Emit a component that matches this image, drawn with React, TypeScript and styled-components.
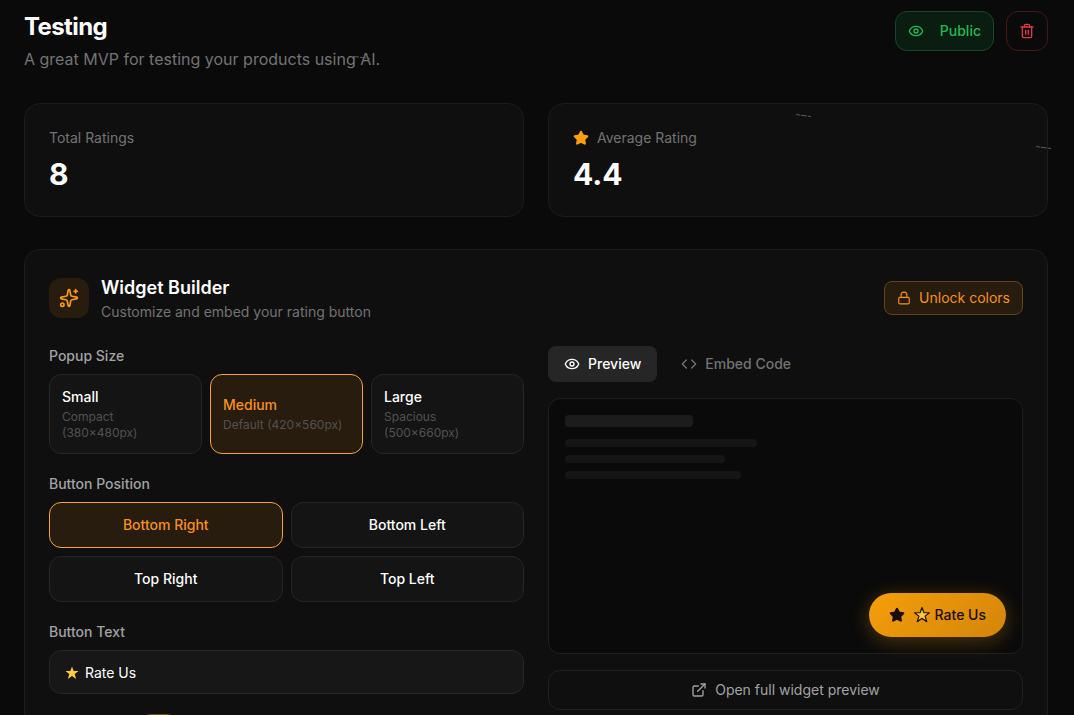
import React, { useState } from "react";
import styled, { createGlobalStyle } from "styled-components";
import { Code, ExternalLink, Eye, Lock, Sparkles, Star, Trash2 } from "lucide-react";

const GlobalStyle = createGlobalStyle`
  *, *::before, *::after { box-sizing: border-box; }
  body {
    margin: 0;
    background: #0a0a0a;
    color: #fff;
    font-family: Inter, "Liberation Sans", sans-serif;
    font-size: 14px;
    line-height: 20px;
  }
  h1, h2, p { margin: 0; }
  button, input { font: inherit; color: inherit; }
  button { cursor: pointer; }
  svg { flex-shrink: 0; }
`;

const Page = styled.main`
  position: relative;
  display: flex;
  flex-direction: column;
  gap: 32px;
  padding: 11px 26px 32px 24px;
`;

const Header = styled.header`
  display: flex;
  align-items: flex-start;
  justify-content: space-between;
`;

const Title = styled.h1`
  font-size: 24px;
  line-height: 32px;
  font-weight: 700;
  letter-spacing: -0.025em;
`;

const Description = styled.p`
  margin-top: 4px;
  font-size: 16px;
  line-height: 24px;
  color: #737373;
`;

const Actions = styled.div`
  display: flex;
  gap: 12px;
`;

const ActionButton = styled.button<{ $tone: "green" | "red" }>`
  display: flex;
  align-items: center;
  gap: 16px;
  height: 40px;
  padding: 0 12px;
  border-radius: 12px;
  font-weight: 500;
  border: 1px solid ${(p) => (p.$tone === "green" ? "#14482a" : "#4a1719")};
  background: ${(p) => (p.$tone === "green" ? "#0a1d11" : "transparent")};
  color: ${(p) => (p.$tone === "green" ? "#22b950" : "#dc3a3f")};
`;

const Stats = styled.section`
  display: grid;
  grid-template-columns: 1fr 1fr;
  gap: 24px;
`;

const Card = styled.div`
  padding: 24px;
  border: 1px solid #1c1c1c;
  border-radius: 16px;
  background: #0f0f0f;
`;

const StatLabel = styled.div`
  display: flex;
  align-items: center;
  gap: 8px;
  color: #737373;
`;

const StatValue = styled.p`
  margin-top: 8px;
  font-size: 30px;
  line-height: 36px;
  font-weight: 700;
`;

const BuilderHeader = styled.div`
  display: flex;
  align-items: center;
  gap: 12px;
  margin-bottom: 24px;
`;

const IconTile = styled.div`
  display: grid;
  place-items: center;
  width: 40px;
  height: 40px;
  border-radius: 12px;
  background: #271c0d;
  color: #f99a1c;
`;

const BuilderTitle = styled.h2`
  font-size: 18px;
  line-height: 28px;
  font-weight: 600;
`;

const Muted = styled.p`
  color: #737373;
`;

const UnlockButton = styled.button`
  display: flex;
  align-items: center;
  gap: 8px;
  margin-left: auto;
  padding: 6px 12px;
  border: 1px solid #64421a;
  border-radius: 8px;
  background: #271c0d;
  color: #f9901f;
`;

const Columns = styled.div`
  display: grid;
  grid-template-columns: 1fr 1fr;
  align-items: start;
  gap: 24px;
`;

const Form = styled.form`
  display: flex;
  flex-direction: column;
  gap: 20px;
`;

const Group = styled.div`
  display: flex;
  flex-direction: column;
  gap: 8px;
`;

const FieldLabel = styled.label`
  font-weight: 500;
  color: #a3a3a3;
`;

const Options = styled.div<{ $columns: number }>`
  display: grid;
  grid-template-columns: repeat(${(p) => p.$columns}, 1fr);
  gap: 8px;
`;

const Option = styled.button<{ $active: boolean; $centered?: boolean }>`
  display: flex;
  flex-direction: column;
  justify-content: center;
  gap: 2px;
  padding: 12px;
  text-align: ${(p) => (p.$centered ? "center" : "left")};
  font-weight: 500;
  border: 1px solid ${(p) => (p.$active ? "#f5a33a" : "#262626")};
  border-radius: 12px;
  background: ${(p) => (p.$active ? "#271c0d" : "#141414")};
  color: ${(p) => (p.$active ? "#f9901f" : "#fff")};
`;

const OptionName = styled.span`
  width: 100%;
`;

const OptionHint = styled.span`
  font-size: 12px;
  line-height: 16px;
  font-weight: 400;
  color: #525252;
`;

const TextField = styled.div`
  display: flex;
  align-items: center;
  gap: 5px;
  height: 44px;
  padding: 1px 14px 0;
  border: 1px solid #262626;
  border-radius: 12px;
  background: #171717;
`;

const TextInput = styled.input`
  flex: 1;
  min-width: 0;
  height: 22px;
  padding: 0;
  border: 0;
  outline: 0;
  background: transparent;
  color: #fff;
`;

const ColorRow = styled.div`
  display: flex;
  padding-left: 92px;
`;

const PlanPill = styled.span`
  width: 36px;
  height: 20px;
  border: 1px solid #7a5212;
  border-radius: 10px;
  background: #271c0d;
`;

const PreviewColumn = styled.section`
  display: flex;
  flex-direction: column;
  gap: 16px;
`;

const Tabs = styled.div`
  display: flex;
  gap: 8px;
`;

const Tab = styled.button<{ $active: boolean }>`
  display: flex;
  align-items: center;
  gap: 8px;
  height: 36px;
  padding: 0 16px;
  border: 0;
  border-radius: 8px;
  font-weight: 500;
  background: ${(p) => (p.$active ? "#262626" : "transparent")};
  color: ${(p) => (p.$active ? "#fff" : "#737373")};
`;

const Preview = styled.div`
  display: flex;
  flex-direction: column;
  gap: 8px;
  height: 256px;
  padding: 16px;
  border: 1px solid #1f1f1f;
  border-radius: 12px;
  background: #0a0a0a;
`;

const TitleBar = styled.div`
  width: 128px;
  height: 12px;
  margin-bottom: 4px;
  border-radius: 4px;
  background: #1c1c1c;
`;

const TextBar = styled.div<{ $width: number }>`
  width: ${(p) => p.$width}px;
  height: 8px;
  border-radius: 4px;
  background: #161616;
`;

const RateButton = styled.button`
  display: flex;
  align-items: center;
  gap: 8px;
  align-self: flex-end;
  height: 44px;
  margin-top: auto;
  padding: 0 20px;
  border: 0;
  border-radius: 22px;
  background: linear-gradient(135deg, #f59e0b, #d4850a);
  box-shadow: 0 4px 20px rgba(245, 158, 11, 0.3);
  color: #180d05;
  font-weight: 500;
`;

const RateText = styled.span`
  display: flex;
  align-items: center;
  gap: 4px;
`;

const OpenLink = styled.a`
  display: flex;
  align-items: center;
  justify-content: center;
  gap: 8px;
  height: 40px;
  border: 1px solid #222;
  border-radius: 12px;
  color: #a3a3a3;
  text-decoration: none;
`;

const Streak = styled.svg<{ $left: string; $top: number }>`
  position: absolute;
  left: ${(p) => p.$left};
  top: ${(p) => p.$top}px;
  pointer-events: none;
`;

function EmojiStar({ outlined = false }: { outlined?: boolean }) {
  return (
    <svg
      width={outlined ? 18 : 16}
      height={outlined ? 18 : 16}
      viewBox="0 0 16 16"
      aria-hidden="true"
    >
      <path
        d="M8 1.4l1.7 4.6h4.9l-3.9 3 1.5 4.9L8 11l-4.2 2.9L5.3 9 1.4 6h4.9z"
        fill="#ffc83d"
        stroke={outlined ? "#241505" : "none"}
        strokeWidth="1.1"
        strokeLinejoin="round"
      />
    </svg>
  );
}

const streaks = [
  { left: "32.9%", top: 55 },
  { left: "73.9%", top: 113 },
  { left: "96.3%", top: 145 },
];

const sizes = [
  { name: "Small", hint: "Compact (380×480px)" },
  { name: "Medium", hint: "Default (420×560px)" },
  { name: "Large", hint: "Spacious (500×660px)" },
];

const positions = ["Bottom Right", "Bottom Left", "Top Right", "Top Left"];

export default function App() {
  const [size, setSize] = useState("Medium");
  const [position, setPosition] = useState("Bottom Right");
  const [text, setText] = useState("Rate Us");
  const [tab, setTab] = useState("preview");

  return (
    <Page>
      <GlobalStyle />
      <Header>
        <div>
          <Title>Testing</Title>
          <Description>A great MVP for testing your products using AI.</Description>
        </div>
        <Actions>
          <ActionButton $tone="green" type="button">
            <Eye size={16} />
            Public
          </ActionButton>
          <ActionButton $tone="red" type="button" aria-label="Delete">
            <Trash2 size={16} />
          </ActionButton>
        </Actions>
      </Header>

      <Stats>
        <Card>
          <StatLabel>Total Ratings</StatLabel>
          <StatValue>8</StatValue>
        </Card>
        <Card>
          <StatLabel>
            <Star size={16} color="#ff9f0a" fill="#ff9f0a" />
            Average Rating
          </StatLabel>
          <StatValue>4.4</StatValue>
        </Card>
      </Stats>

      <Card as="section">
        <BuilderHeader>
          <IconTile>
            <Sparkles size={20} />
          </IconTile>
          <div>
            <BuilderTitle>Widget Builder</BuilderTitle>
            <Muted>Customize and embed your rating button</Muted>
          </div>
          <UnlockButton type="button">
            <Lock size={14} />
            Unlock colors
          </UnlockButton>
        </BuilderHeader>

        <Columns>
          <Form onSubmit={(e) => e.preventDefault()}>
            <Group role="group" aria-labelledby="size-label">
              <FieldLabel as="span" id="size-label">Popup Size</FieldLabel>
              <Options $columns={3}>
                {sizes.map((s) => (
                  <Option key={s.name} type="button" $active={size === s.name} onClick={() => setSize(s.name)}>
                    <OptionName>{s.name}</OptionName>
                    <OptionHint>{s.hint}</OptionHint>
                  </Option>
                ))}
              </Options>
            </Group>
            <Group role="group" aria-labelledby="position-label">
              <FieldLabel as="span" id="position-label">Button Position</FieldLabel>
              <Options $columns={2}>
                {positions.map((p) => (
                  <Option key={p} type="button" $centered $active={position === p} onClick={() => setPosition(p)}>
                    <OptionName>{p}</OptionName>
                  </Option>
                ))}
              </Options>
            </Group>
            <Group>
              <FieldLabel htmlFor="button-text">Button Text</FieldLabel>
              <TextField>
                <EmojiStar />
                <TextInput id="button-text" value={text} onChange={(e) => setText(e.target.value)} />
              </TextField>
            </Group>
            <ColorRow>
              <PlanPill />
            </ColorRow>
          </Form>

          <PreviewColumn>
            <Tabs role="tablist">
              <Tab type="button" role="tab" aria-selected={tab === "preview"} $active={tab === "preview"} onClick={() => setTab("preview")}>
                <Eye size={16} />
                Preview
              </Tab>
              <Tab type="button" role="tab" aria-selected={tab === "code"} $active={tab === "code"} onClick={() => setTab("code")}>
                <Code size={16} />
                Embed Code
              </Tab>
            </Tabs>
            <Preview>
              <TitleBar />
              <TextBar $width={192} />
              <TextBar $width={160} />
              <TextBar $width={176} />
              <RateButton type="button">
                <Star size={16} fill="currentColor" />
                <RateText>
                  <EmojiStar outlined />
                  {text}
                </RateText>
              </RateButton>
            </Preview>
            <OpenLink href="#preview">
              <ExternalLink size={16} />
              Open full widget preview
            </OpenLink>
          </PreviewColumn>
        </Columns>
      </Card>

      {streaks.map((s) => (
        <Streak key={s.left} $left={s.left} $top={s.top} width="20" height="5" viewBox="0 0 20 5" aria-hidden="true">
          <path d="M2 1.5L9 2.5M9 2.5L17 3.5" stroke="#5a5a5a" strokeWidth="1" strokeDasharray="4 1" fill="none" />
        </Streak>
      ))}
    </Page>
  );
}
